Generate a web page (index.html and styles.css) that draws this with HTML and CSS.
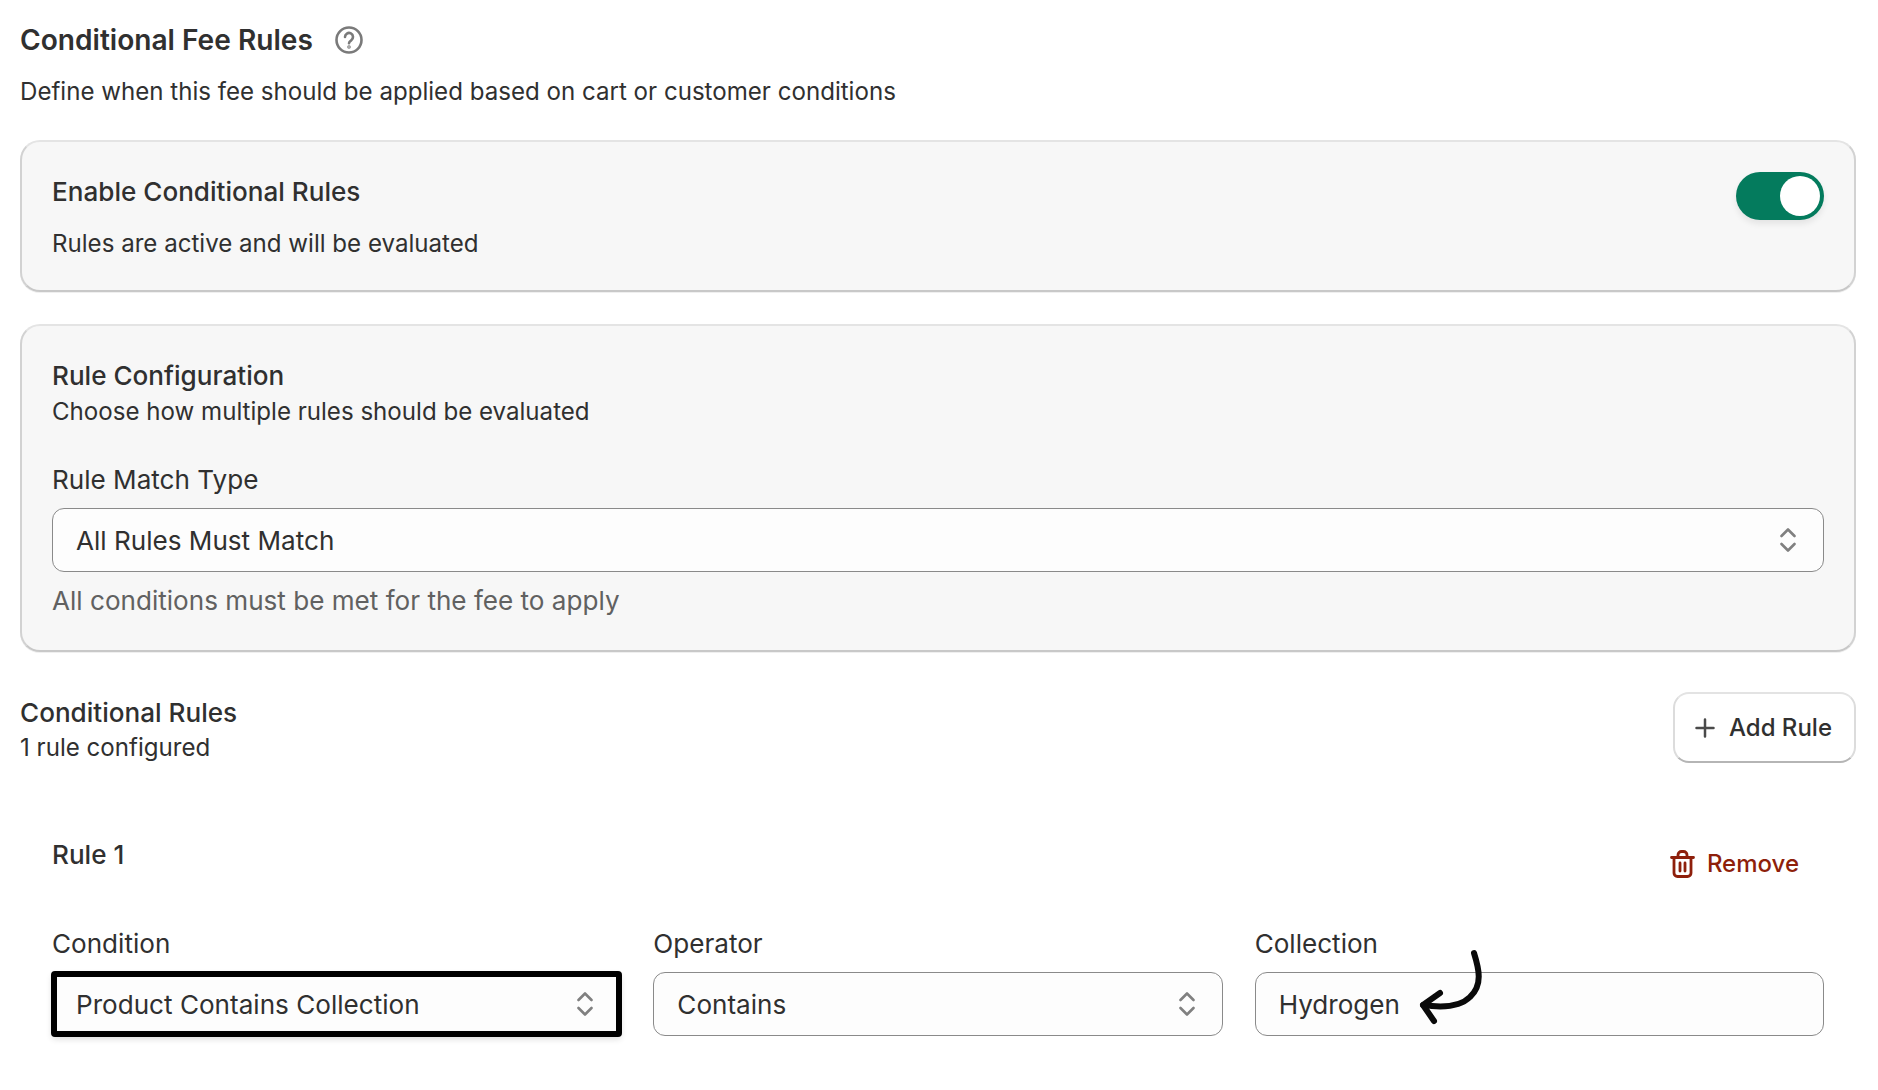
FILE: index.html
```html
<!DOCTYPE html>
<html lang="en">
<head>
<meta charset="utf-8">
<title>Conditional Fee Rules</title>
<link rel="stylesheet" href="styles.css">
</head>
<body>
<main class="page">
  <header class="head">
    <div class="title-row">
      <h1 class="title">Conditional Fee Rules</h1>
      <svg class="help" width="28" height="28" viewBox="0 0 28 28" fill="none" stroke="#7a7a7a" stroke-width="2.600" stroke-linecap="round"><circle cx="14" cy="14" r="12.500"/><path d="M10 11a4 4 0 1 1 6.200 3.300c-1.400.9-2.200 1.500-2.200 2.900"/><circle cx="14" cy="21" r="0.500" fill="#7a7a7a"/></svg>
    </div>
    <p class="text head-sub">Define when this fee should be applied based on cart or customer conditions</p>
  </header>

  <section class="card card-enable">
    <div>
      <h2 class="heading">Enable Conditional Rules</h2>
      <p class="text enable-sub">Rules are active and will be evaluated</p>
    </div>
    <div class="toggle"><span class="knob"></span></div>
  </section>

  <section class="card card-config">
    <h2 class="heading">Rule Configuration</h2>
    <p class="text">Choose how multiple rules should be evaluated</p>
    <label class="label match-label">Rule Match Type</label>
    <div class="field">All Rules Must Match<svg class="chev" width="16" height="24" viewBox="0 0 16 24" fill="none" stroke="#808080" stroke-width="2.600" stroke-linecap="round" stroke-linejoin="round"><path d="M1.500 8 8 1.500 14.500 8M1.500 16 8 22.500 14.500 16"/></svg></div>
    <p class="hint">All conditions must be met for the fee to apply</p>
  </section>

  <section class="rules-head">
    <div class="rules-title">
      <h2 class="heading">Conditional Rules</h2>
      <p class="text rules-sub">1 rule configured</p>
    </div>
    <button class="add-btn"><svg width="20" height="20" viewBox="0 0 20 20" fill="none" stroke="#4a4a4a" stroke-width="2.500" stroke-linecap="round"><path d="M10 1.500v17M1.500 10h17"/></svg>Add Rule</button>
  </section>

  <section class="rule">
    <div class="rule-top">
      <h3 class="heading">Rule 1</h3>
      <button class="remove"><svg width="25" height="28" viewBox="0 0 25 28" fill="none" stroke="#8e1f0b" stroke-width="2.800" stroke-linecap="round" stroke-linejoin="round"><path d="M1.500 7.500h22M8 7V5a3.500 3.500 0 0 1 3.500-3.500h2A3.500 3.500 0 0 1 17 5v2M4 8v15a3.500 3.500 0 0 0 3.500 3.500h10A3.500 3.500 0 0 0 21 23V8M10 13v8M15 13v8"/></svg>Remove</button>
    </div>
    <div class="rule-grid">
      <div>
        <label class="label">Condition</label>
        <div class="field-wrap highlighted"><div class="field">Product Contains Collection<svg class="chev" width="16" height="24" viewBox="0 0 16 24" fill="none" stroke="#808080" stroke-width="2.600" stroke-linecap="round" stroke-linejoin="round"><path d="M1.500 8 8 1.500 14.500 8M1.500 16 8 22.500 14.500 16"/></svg></div></div>
      </div>
      <div>
        <label class="label">Operator</label>
        <div class="field-wrap"><div class="field">Contains<svg class="chev" width="16" height="24" viewBox="0 0 16 24" fill="none" stroke="#808080" stroke-width="2.600" stroke-linecap="round" stroke-linejoin="round"><path d="M1.500 8 8 1.500 14.500 8M1.500 16 8 22.500 14.500 16"/></svg></div></div>
      </div>
      <div>
        <label class="label">Collection</label>
        <div class="field-wrap"><div class="field">Hydrogen</div>
          <svg class="arrow" width="75" height="85" viewBox="0 0 75 85" fill="none" stroke="#0a0a0a" stroke-width="6" stroke-linecap="round" stroke-linejoin="round"><path d="M59 8C64 24 68 40 55 52 45 62 28 63 8 60"/><path d="M25 48 8 60 19 76"/></svg>
        </div>
      </div>
    </div>
  </section>
</main>
</body>
</html>
```
FILE: styles.css
```css
* { box-sizing: border-box; }
html, body { margin: 0; padding: 0; }
body { background: #fff; color: #303030; font-family: Inter, "Liberation Sans", sans-serif; width: 1878px; height: 1090px; overflow: hidden; }
.page { padding: 20px 22px 0 20px; }
h1, h2, h3, p { margin: 0; }
.title-row { display: flex; align-items: center; gap: 22px; height: 40px; }
.title { font-size: 28.100px; font-weight: 600; line-height: 40px; }
.help { flex: none; }
.text { font-size: 24.100px; line-height: 36px; }
.head-sub { margin-top: 14px; }
.card { background: #f7f7f7; border-style: solid; border-width: 2px; border-color: #e4e4e4 #d2d2d2 #c8c8c8; border-radius: 20px; box-shadow: 0 1px 0 #efefef; }
.card-enable { margin-top: 30px; height: 152px; padding: 32px 30px 0 30px; display: flex; justify-content: space-between; }
.heading { font-size: 26.100px; font-weight: 500; line-height: 36px; }
.enable-sub { margin-top: 16px; }
.toggle { width: 88px; height: 48px; margin-top: -2px; border-radius: 24px; background: #047b5d; padding: 4px 4px 4px 44px; box-shadow: 0 4px 6px rgba(0,0,0,.08); }
.knob { display: block; width: 40px; height: 40px; background: #fff; border-radius: 50%; }
.card-config { margin-top: 32px; height: 328px; padding: 32px 30px 0 30px; }
.label { display: block; font-size: 26.100px; line-height: 36px; }
.match-label { margin-top: 32px; }
.field { display: flex; align-items: center; justify-content: space-between; height: 64px; background: #fdfdfd; border: 1px solid #8a8a8a; border-radius: 12px; padding: 0 27px 0 23px; margin-top: 10px; font-size: 26.100px; color: #303030; }
.hint { margin-top: 11px; font-size: 26.100px; line-height: 36px; color: #616161; }
.rules-head { margin-top: 40px; display: flex; justify-content: space-between; }
.rules-title { padding-top: 3px; }
.rules-sub { margin-top: -1px; }
.add-btn { display: flex; align-items: center; gap: 14px; height: 71px; padding: 0 22px 0 20px; background: #fff; border-style: solid; border-width: 2px; border-color: #e3e3e3 #dcdcdc #b5b5b5; border-radius: 16px; font: 500 24px Inter, "Liberation Sans", sans-serif; color: #303030; }
.rule { padding: 0 32px; margin-top: 71px; }
.rule-top { display: flex; justify-content: space-between; align-items: flex-start; height: 40px; }
.remove { display: flex; align-items: center; gap: 12px; border: 0; background: none; padding: 0; margin: 12px 25px 0 0; font: 500 24px Inter, "Liberation Sans", sans-serif; color: #8e1f0b; }
.rule-grid { display: grid; grid-template-columns: repeat(3, 1fr); gap: 32px; margin-top: 49px; }
.rule-grid .field { margin-top: 0; }
.rule-grid .label { margin-bottom: 10px; }
.field-wrap { position: relative; }
.highlighted { border-radius: 3px; outline: 6px solid #000; outline-offset: -5px; box-shadow: 0 3px 6px rgba(0,0,0,.14); }
.highlighted .field { border-radius: 2px; }
.arrow { position: absolute; left: 160px; top: -27px; }
```
